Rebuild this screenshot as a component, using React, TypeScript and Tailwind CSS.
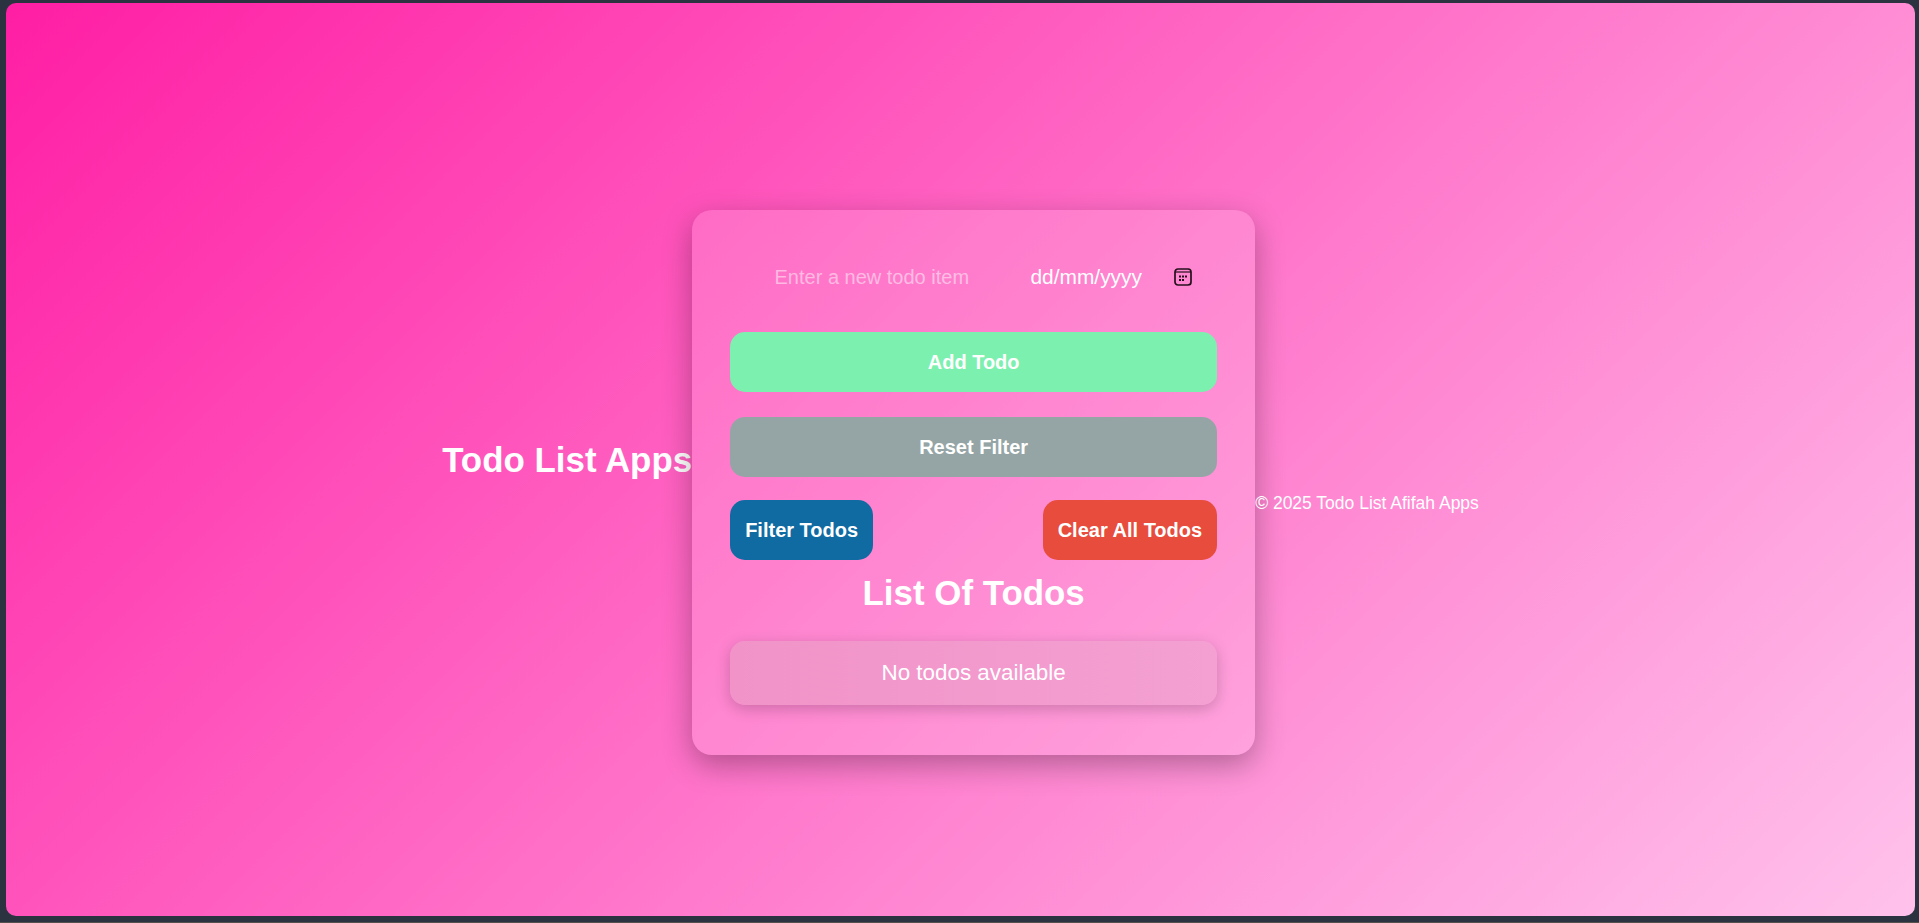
export default function App() {
  return (
    <div className="h-[923px] w-full border-b border-[#55524e] bg-[#2c3340] pt-[3px] pr-[4px] pb-[6px] pl-[6px] font-['Liberation_Sans',Arial,sans-serif] text-white">
      <div className="flex h-full items-center justify-center rounded-[10px] bg-[linear-gradient(135deg,#ff1ea4,#ffc2ec)]">
        <h1 className="text-[34.9px] leading-[42px] font-bold whitespace-nowrap">Todo List Apps</h1>

        <div className="mt-[45px] w-[563px] shrink-0 rounded-[20px] bg-white/15 px-[38px] pt-[39px] pb-[50px] shadow-[0_10px_30px_rgba(0,0,0,0.3)]">
          {/* Inputs */}
          <div className="flex h-[56px] items-center justify-between">
            <input
              placeholder="Enter a new todo item"
              className="ml-[2px] w-[280px] bg-transparent text-center text-[20px] outline-none placeholder:text-white/50"
            />
            <div className="flex w-[206px] items-center justify-between pr-[25px] pl-[19px] text-[20.9px]">
              <span>dd/mm/yyyy</span>
              <svg className="mt-[2px]" width="18" height="18" viewBox="0 0 18 18" fill="none" stroke="#24101c" strokeWidth="1.7">
                <rect x="1" y="1" width="16" height="16" rx="3" />
                <path d="M1 4h16" strokeWidth="1.2" />
                <path d="M5 8.5h2M8 8.5h2M11 8.5h2M5 12h2M8 12h2" strokeWidth="2" />
              </svg>
            </div>
          </div>

          <button className="mt-[27px] block h-[60px] w-full rounded-[15px] bg-[#7cf0ae] text-[20px] font-bold">
            Add Todo
          </button>
          <button className="mt-[25px] block h-[60px] w-full rounded-[15px] bg-[#95a5a6] text-[20px] font-bold">
            Reset Filter
          </button>

          <div className="mt-[23px] flex justify-between">
            <button className="h-[60px] rounded-[15px] bg-[#106ba3] px-[15px] text-[20px] font-bold">Filter Todos</button>
            <button className="h-[60px] rounded-[15px] bg-[#e74c3c] px-[15px] text-[20px] font-bold">Clear All Todos</button>
          </div>

          <h2 className="mt-[12px] text-center text-[34.9px] leading-[42px] font-bold">List Of Todos</h2>

          <div className="mt-[27px] flex h-[64px] items-center justify-center rounded-[15px] bg-linear-to-r from-[#f193c8] to-[#f4a0d2] text-[22.4px] shadow-[0_4px_15px_rgba(0,0,0,0.2)]">
            No todos available
          </div>
        </div>

        <p className="mt-[88px] text-[17.5px] whitespace-nowrap">© 2025 Todo List Afifah Apps</p>
      </div>
    </div>
  );
}
